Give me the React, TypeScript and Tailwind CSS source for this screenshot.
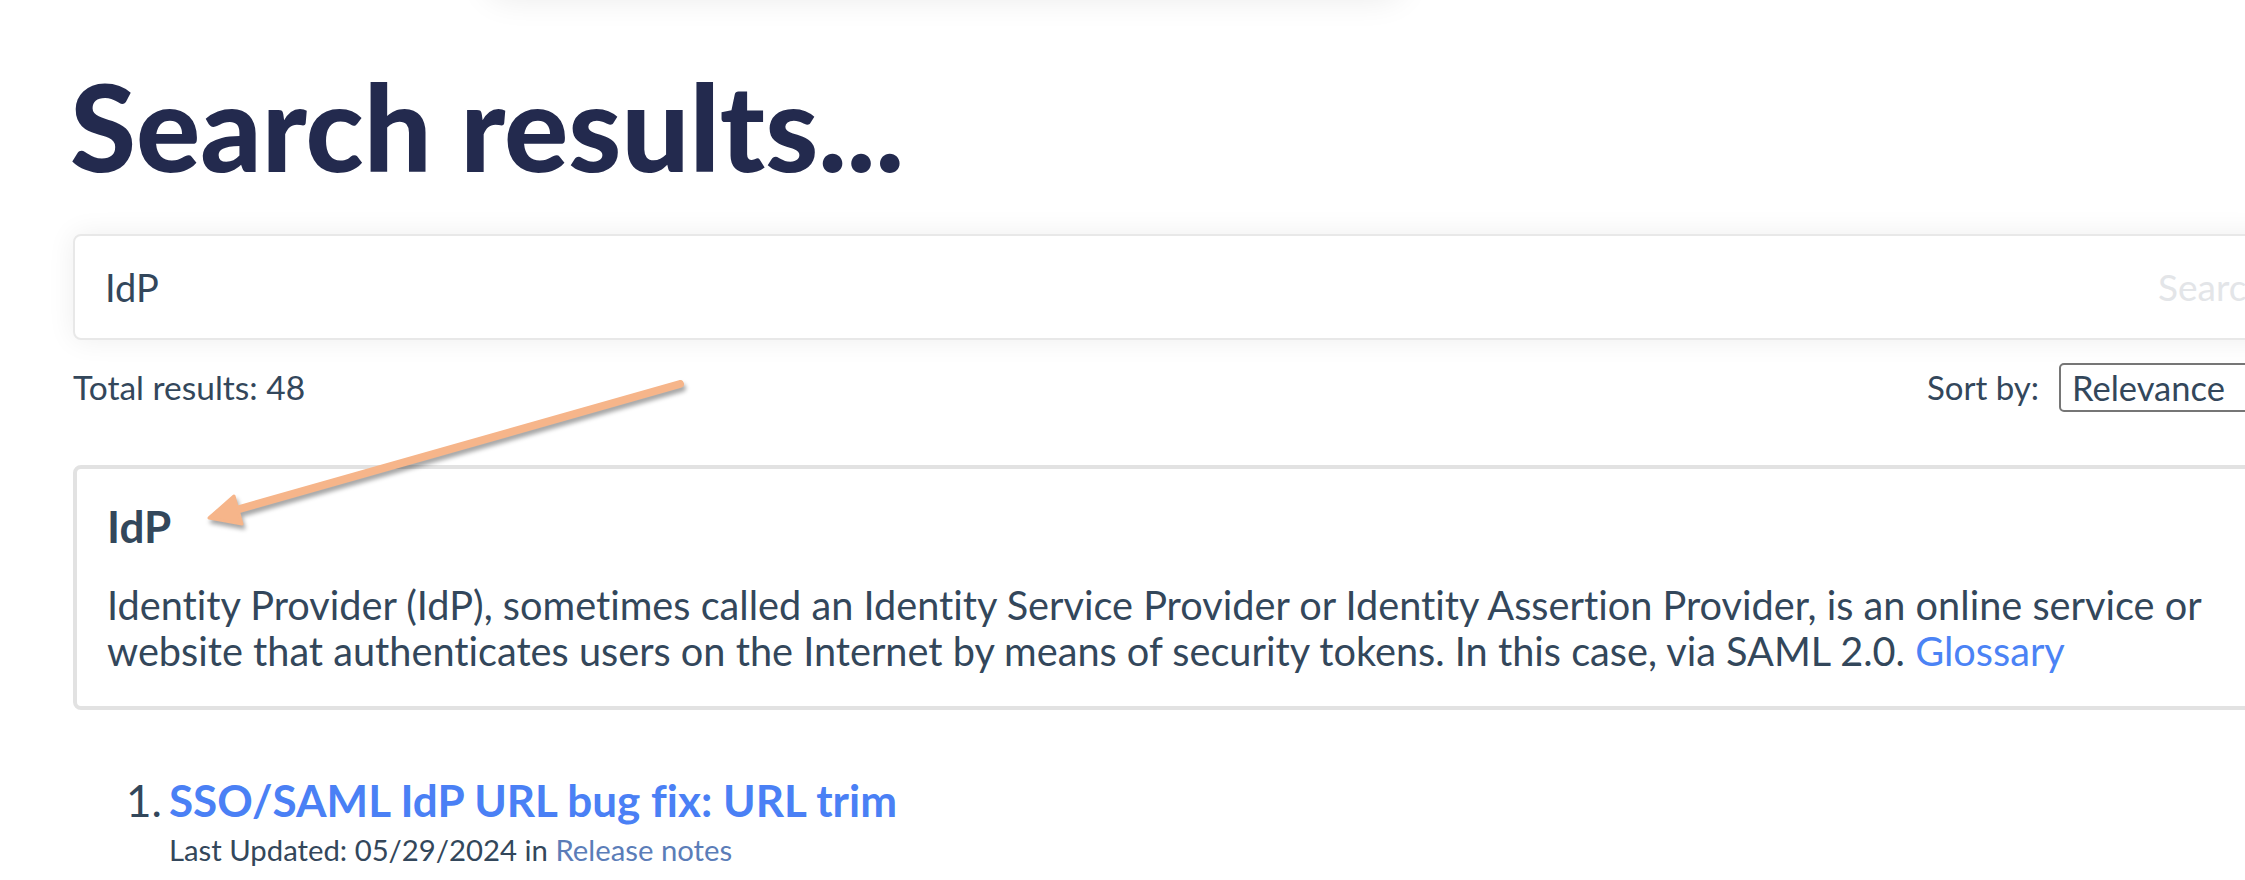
import React from 'react';

export default function App() {
  return (
    <div className="relative h-[880px] w-full overflow-hidden bg-white font-['Lato',sans-serif] text-[#33475b] [font-variant-ligatures:none]">
      {/* faint shadow of the header element above the page */}
      <div className="absolute -top-[42px] left-[487px] h-[40px] w-[916px] rounded-[20px] bg-white shadow-[0_0_34px_rgba(0,0,0,0.09)]" />

      <div className="relative ml-[73px] w-[2200px] pt-[66px]">
        <h1 className="-ml-[3px] text-[120px] font-black leading-none text-[#232a4e]">
          Search results...
        </h1>

        <div className="mt-[48px] flex h-[106px] items-center justify-between rounded-[8px] border-2 border-[#e8e8e8] bg-white pl-[30px] pr-[4px] shadow-[0_0_28px_rgba(0,0,0,0.07)]">
          <span className="text-[38px]">IdP</span>
          <span className="text-[37px] text-[#e3e5e8]">Search</span>
        </div>

        <div className="mt-[23px] flex h-[49px] items-center justify-between">
          <span className="text-[33.5px]">Total results: 48</span>
          <div className="flex items-center gap-[20px]">
            <span className="text-[33px]">Sort by:</span>
            <div className="flex h-[49px] w-[214px] items-center rounded-[5px] border-2 border-[#767676] pl-[11px] text-[34.5px]">
              Relevance
            </div>
          </div>
        </div>

        <div className="mt-[53px] rounded-[8px] border-4 border-[#e2e2e2] pb-[32px] pl-[30px] pt-[31px]">
          <h2 className="text-[44px] font-bold leading-[1.2]">IdP</h2>
          <p className="mt-[29px] text-[39.7px] leading-[46px]">
            Identity Provider (IdP), sometimes called an Identity Service Provider or Identity Assertion Provider, is an online service or
            <br />
            website that authenticates users on the Internet by means of security tokens. In this case, via SAML 2.0.{' '}
            <a className="text-[#4b83f5]">Glossary</a>
          </p>
        </div>

        <ol className="mt-[63px] pl-[53px]">
          <li className="flex gap-[7px]">
            <span className="text-[44px] leading-[1.25]">1.</span>
            <div className="flex flex-col">
              <a className="text-[44px] font-bold leading-[1.25] text-[#4a80f5]">SSO/SAML IdP URL bug fix: URL trim</a>
              <span className="mt-[4px] text-[29.3px] leading-[1.2]">
                Last Updated: 05/29/2024 in <a className="text-[#5b7db8]">Release notes</a>
              </span>
            </div>
          </li>
        </ol>
      </div>

      {/* annotation arrow */}
      <svg
        className="pointer-events-none absolute left-0 top-0 drop-shadow-[2px_4px_2px_rgba(0,0,0,0.35)]"
        width="800"
        height="600"
        viewBox="0 0 800 600"
      >
        <line x1="680" y1="384" x2="236" y2="510" stroke="#f6b58a" strokeWidth="8" strokeLinecap="round" />
        <polygon points="209,518 234,496 242,524" fill="#f6b58a" stroke="#f6b58a" strokeWidth="3" strokeLinejoin="round" />
      </svg>
    </div>
  );
}
